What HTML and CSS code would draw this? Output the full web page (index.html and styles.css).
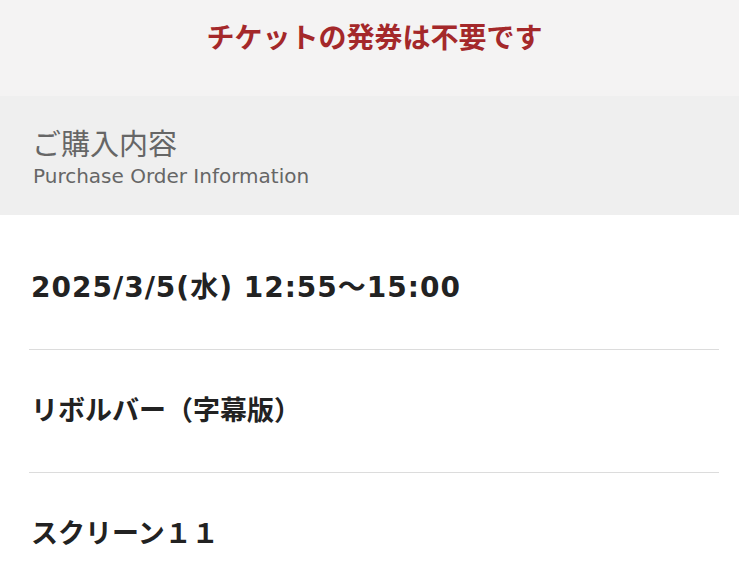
FILE: index.html
```html
<!DOCTYPE html>
<html lang="ja">
  <head>
    <meta charset="utf-8" />
    <meta name="viewport" content="width=device-width, initial-scale=1" />
    <title>ご購入内容</title>
    <link rel="stylesheet" href="styles.css">
  </head>
  <body>
    <!--Notice-->
    <div class="notice">
      <p class="notice-text">チケットの発券は不要です</p>
    </div>

    <!--Section header-->
    <div class="section-head">
      <p class="section-title">ご購入内容</p>
      <p class="section-sub">Purchase Order Information</p>
    </div>

    <!--Order rows-->
    <ul class="order-list">
      <li class="order-row order-date">2025/3/5(水) 12:55～15:00</li>
      <li class="order-row">リボルバー（字幕版）</li>
      <li class="order-row">スクリーン１１</li>
    </ul>
  </body>
</html>
```

FILE: styles.css
```css
body {
  margin: 0;
  background-color: #fff;
  font-family: "DejaVu Sans", "Noto Sans CJK JP", sans-serif;
  color: #222;
}
p {
  margin: 0;
}
.notice {
  background-color: #f4f3f3;
  height: 96px;
  display: flex;
  justify-content: center;
  padding-top: 18px;
  box-sizing: border-box;
}
.notice-text {
  color: #a4282a;
  font-family: "Noto Sans CJK JP", sans-serif;
  font-weight: 700;
  font-size: 28px;
  line-height: 36px;
  padding-left: 10px;
}
.section-head {
  background-color: #efefef;
  height: 119px;
  padding: 26px 0 0 32px;
  box-sizing: border-box;
  color: #666;
}
.section-title {
  font-family: "Noto Sans CJK JP", sans-serif;
  font-size: 29px;
  line-height: 40px;
}
.section-sub {
  font-size: 20px;
  line-height: 26px;
  margin-top: 1px;
  padding-left: 1px;
}
.order-list {
  list-style: none;
  margin: 0;
  padding: 12px 20px 0 29px;
}
.order-row {
  padding: 46px 0 46px 2px;
  line-height: 30px;
  font-size: 27px;
  font-weight: 700;
  border-bottom: 1px solid #dcdcdc;
}
.order-date {
  font-size: 28px;
  letter-spacing: 1px;
}
.order-row:last-child {
  border-bottom: none;
}
```
